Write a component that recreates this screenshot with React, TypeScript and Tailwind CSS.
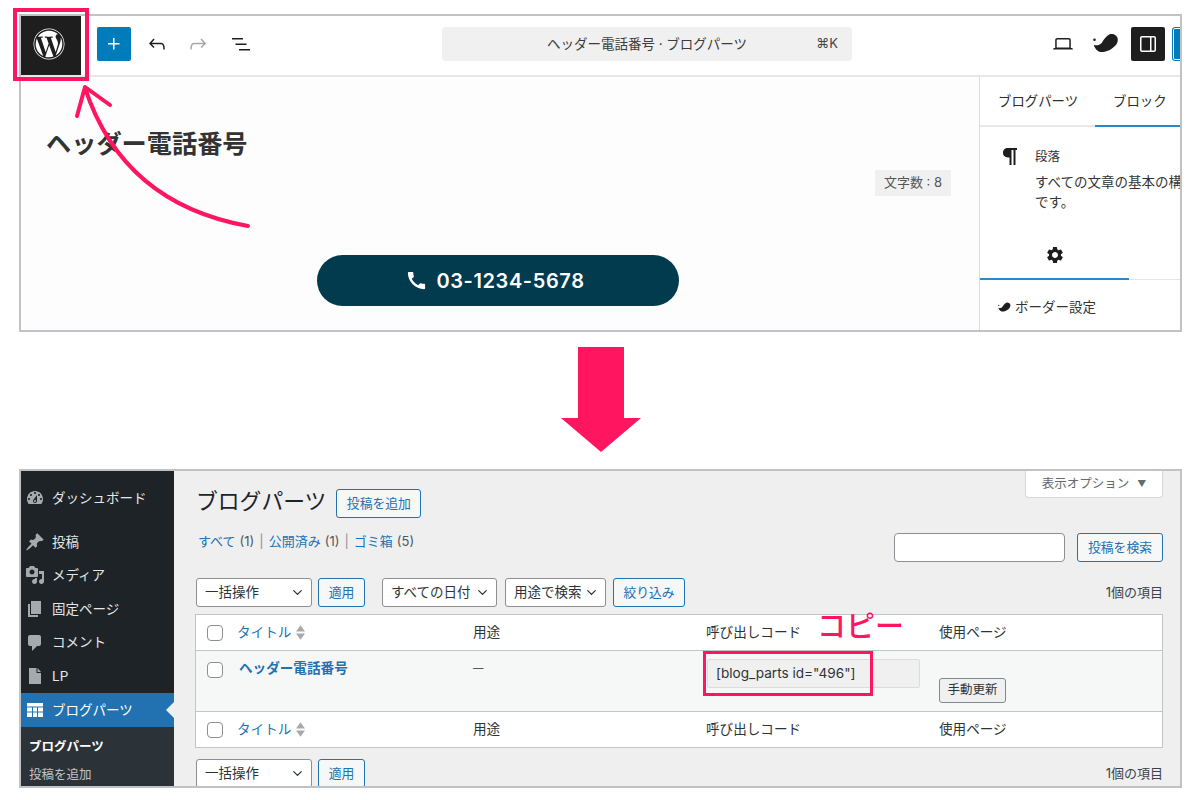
import type { ReactNode } from "react";
import { ChevronDown } from "lucide-react";
import { FaWordpress } from "react-icons/fa";
import { MdCall, MdSettings } from "react-icons/md";

function WpIcon({ d, className }: { d: string; className?: string }) {
  return (
    <svg viewBox="0 0 24 24" className={className} fill="currentColor">
      <path d={d} />
    </svg>
  );
}

function DashIcon({ d }: { d: string }) {
  return (
    <svg viewBox="0 0 20 20" className="h-[20px] w-[20px] shrink-0 text-[#a7aaad]" fill="currentColor">
      <path d={d} />
    </svg>
  );
}

function Bird({ className }: { className?: string }) {
  return (
    <svg viewBox="0 0 26 20" className={className} fill="currentColor">
      <circle cx="1.500" cy="6.700" r="1.300" />
      <path d="M0.800 11.700C3 12.500 5.500 12.500 7.500 11C9.500 9.500 10.500 6.500 12.200 5C14 3 16 1 18.200 1C21.500 1 24.800 3 24.800 6.700C24.800 9.500 23.500 11.500 22.200 12.800C20 15 17.500 17 14.800 17.800C12 19 9.500 19.300 7.500 19C4.500 18.500 1.800 15.500 0.800 11.700Z" />
    </svg>
  );
}

const dashIcons = {
  dashboard:
    "M3.760 16h12.480c1.100-1.370 1.760-3.110 1.760-5 0-4.420-3.580-8-8-8s-8 3.580-8 8c0 1.890.66 3.630 1.760 5zM10 4c.55 0 1 .45 1 1s-.45 1-1 1-1-.45-1-1 .45-1 1-1zM6 6c.55 0 1 .45 1 1s-.45 1-1 1-1-.45-1-1 .45-1 1-1zm8 0c.55 0 1 .45 1 1s-.45 1-1 1-1-.45-1-1 .45-1 1-1zm-5.370 5.550L12 7v6c0 1.100-.9 2-2 2s-2-.9-2-2c0-.57.24-1.080.63-1.450zM4 10c.55 0 1 .45 1 1s-.45 1-1 1-1-.45-1-1 .45-1 1-1zm12 0c.55 0 1 .45 1 1s-.45 1-1 1-1-.45-1-1 .45-1 1-1zm-5 3c0-.55-.45-1-1-1s-1 .45-1 1 .45 1 1 1 1-.45 1-1z",
  post: "M10.440 3.020l1.820-1.820 6.360 6.350-1.830 1.820c-1.050-.68-2.480-.57-3.410.36l-.75.75c-.92.93-1.040 2.350-.35 3.410l-1.830 1.820-2.410-2.410-2.800 2.790c-.42.42-3.380 2.710-3.800 2.290s1.860-3.390 2.280-3.810l2.790-2.790L4.100 9.360l1.830-1.820c1.050.69 2.480.57 3.400-.36l.75-.75c.93-.92 1.050-2.350.36-3.410z",
  media:
    "M13 11V4c0-.55-.45-1-1-1h-1.670L9 1H5L3.670 3H2c-.55 0-1 .45-1 1v7c0 .55.45 1 1 1h10c.55 0 1-.45 1-1zM7 4.500c1.380 0 2.500 1.120 2.500 2.500S8.380 9.500 7 9.500 4.500 8.380 4.500 7 5.620 4.500 7 4.500zM14 6h5v10.500c0 1.380-1.120 2.500-2.500 2.500S14 17.880 14 16.500s1.120-2.500 2.500-2.500c.17 0 .34.02.5.05V9h-3V6zm-4 8.050V13h2v3.500c0 1.380-1.120 2.500-2.500 2.500S7 17.880 7 16.500 8.120 14 9.500 14c.17 0 .34.02.5.05z",
  page: "M6 15V2h10v13H6zm-1 1h8v2H3V5h2v11z",
  comment: "M5 2h9c1.100 0 2 .9 2 2v7c0 1.100-.9 2-2 2h-2l-5 5v-5H5c-1.100 0-2-.9-2-2V4c0-1.100.9-2 2-2z",
  lp: "M4 2h7.500v5H16v11H4zM12.500 2L16 6h-3.500z",
  table:
    "M2 3h16v3.500H2zM2 7.500h5v4H2zM8 7.500h4v4H8zM13 7.500h5v4h-5zM2 12.500h5V17H2zM8 12.500h4V17H8zM13 12.500h5V17h-5z",
};

const menu = [
  { label: "投稿", icon: dashIcons.post },
  { label: "メディア", icon: dashIcons.media },
  { label: "固定ページ", icon: dashIcons.page },
  { label: "コメント", icon: dashIcons.comment },
  { label: "LP", icon: dashIcons.lp },
];

function Outline({ children, className = "" }: { children: ReactNode; className?: string }) {
  return (
    <div className={`flex h-[29px] items-center justify-center rounded-[3px] border border-[#2271b1] bg-[#f6f7f7] text-[12.800px] text-[#2271b1] ${className}`}>
      {children}
    </div>
  );
}

function Select({ label, className = "" }: { label: string; className?: string }) {
  return (
    <div className={`flex h-[29px] items-center justify-between rounded-[3px] border border-[#8c8f94] bg-white pl-[8px] pr-[6px] text-[13.500px] text-[#2c3338] ${className}`}>
      <span className="whitespace-nowrap">{label}</span>
      <ChevronDown size={15} strokeWidth={2} className="text-[#2c3338]" />
    </div>
  );
}

function Checkbox() {
  return <div className="h-[16px] w-[16px] rounded-[4px] border border-[#8c8f94] bg-white" />;
}

function SortArrows() {
  return (
    <svg viewBox="0 0 10 16" className="h-[15px] w-[9px] text-[#a7aaad]" fill="currentColor">
      <path d="M5 0l5 7H0zM0 9h10l-5 7z" />
    </svg>
  );
}

function HeadRow({ bottom }: { bottom?: boolean }) {
  return (
    <div className={`grid grid-cols-[41px_236px_233px_233px_1fr] items-center text-[13.600px] text-[#2c3338] ${bottom ? "h-[35px]" : "h-[36px] border-b border-[#c3c4c7]"}`}>
      <div className="pl-[11px]">
        <Checkbox />
      </div>
      <div className="flex items-center gap-[5px] text-[#2271b1]">
        タイトル
        <SortArrows />
      </div>
      <div>用途</div>
      <div>呼び出しコード</div>
      <div>使用ページ</div>
    </div>
  );
}

export default function App() {
  return (
    <div className="relative h-[800px] w-[1200px] overflow-hidden bg-white pl-[19px] pt-[14px] font-['Inter','Noto_Sans_CJK_JP',sans-serif]">
      {/* エディタ画面 */}
      <div className="flex h-[318px] w-[1163px] flex-col overflow-hidden border-2 border-[#c0c2c6] bg-white">
        <div className="flex h-[61px] shrink-0 items-center border-b-2 border-[#e8e8e8] pb-[3px]">
          <div className="flex h-[59px] w-[60px] shrink-0 items-center justify-center self-start bg-[#1e1e1e] pb-[4px] pr-[5px] text-white">
            <FaWordpress size={32} />
          </div>
          <div className="ml-[16px] flex h-[34px] w-[34px] shrink-0 items-center justify-center rounded-[2px] bg-[#007cba] text-white">
            <WpIcon d="M11 12.500V17.500H12.500V12.500H17.500V11H12.500V6H11V11H6V12.500H11Z" className="h-[24px] w-[24px]" />
          </div>
          <div className="ml-[9px] flex w-[34px] shrink-0 justify-center text-[#1e1e1e]">
            <WpIcon d="M18.300 11.700c-.6-.6-1.400-.9-2.300-.9H6.700l2.900-3.300-1.100-1-4.500 5L8.500 16l1-1-2.700-2.700H16c.5 0 .9.2 1.300.5 1 1 1 3.400 1 4.500v.3h1.500v-.2c0-1.500 0-4.300-1.500-5.700z" className="h-[24px] w-[24px]" />
          </div>
          <div className="ml-[7px] flex w-[34px] shrink-0 justify-center text-[#a8a8a8]">
            <WpIcon d="M15.600 6.500l-1.100 1 2.900 3.300H8c-.9 0-1.700.3-2.300.9-1.400 1.500-1.400 4.200-1.400 5.600v.2h1.500v-.3c0-1.100 0-3.500 1-4.500.3-.3.7-.5 1.300-.5h9.200L14.500 15l1.100 1.100 4.600-4.600-4.600-5z" className="h-[24px] w-[24px]" />
          </div>
          <div className="ml-[9px] flex w-[34px] shrink-0 justify-center text-[#1e1e1e]">
            <WpIcon d="M3 6h11v1.500H3V6zm3.500 5.500h11V13h-11v-1.500zM21 17H10v1.500h11V17z" className="h-[24px] w-[24px]" />
          </div>
          <div className="relative ml-[184px] flex h-[34px] w-[410px] shrink-0 items-center justify-center rounded-[4px] bg-[#f0f0f0] text-[13.500px] text-[#3c3c3c]">
            ヘッダー電話番号 · ブログパーツ
            <span className="absolute right-[14px] text-[13px] text-[#444]">⌘K</span>
          </div>
          <div className="ml-[199px] flex w-[24px] shrink-0 justify-center text-[#1e1e1e]">
            <WpIcon d="M20.500 16h-.7V8c0-1.100-.9-2-2-2H6.200c-1.100 0-2 .9-2 2v8h-.7c-.8 0-1.500.7-1.500 1.500h20c0-.8-.7-1.500-1.500-1.500zM5.700 8c0-.3.2-.5.5-.5h11.600c.3 0 .5.2.5.5v7.600H5.700V8z" className="h-[24px] w-[24px]" />
          </div>
          <Bird className="ml-[18px] h-[20px] w-[26px] shrink-0 -translate-y-px text-[#1e1e1e]" />
          <div className="ml-[12px] flex h-[34px] w-[34px] shrink-0 items-center justify-center rounded-[2px] bg-[#1e1e1e] text-white">
            <WpIcon d="M18 4H6c-1.100 0-2 .9-2 2v12c0 1.100.9 2 2 2h12c1.100 0 2-.9 2-2V6c0-1.100-.9-2-2-2zm-4 14.500H6c-.3 0-.5-.2-.5-.5V6c0-.3.2-.5.5-.5h8v13zm4.500-.5c0 .3-.2.5-.5.5h-2.500v-13H18c.3 0 .5.2.5.5v12z" className="h-[24px] w-[24px]" />
          </div>
          <div className="ml-[7px] h-[34px] w-[34px] shrink-0 rounded-[3px] border border-[#007cba] bg-[#007cba] shadow-[inset_0_0_0_1px_white]" />
        </div>

        <div className="flex min-h-0 flex-1">
          <div className="flex flex-1 flex-col bg-[#fdfdfd]">
            <div className="pl-[25px] pt-[49px] text-[25.200px] font-bold leading-[36px] text-[#333]">ヘッダー電話番号</div>
            <div className="flex justify-end pr-[28px] pt-[8px]">
              <div className="flex h-[26px] w-[76px] items-center justify-center bg-[#f0f0f0] text-[13px] text-[#555]">文字数 : 8</div>
            </div>
            <div className="pl-[296px] pt-[59px]">
              <div className="flex h-[51px] w-[362px] items-center justify-center gap-[8px] rounded-[26px] bg-[#023a4e] pr-[6px] text-[20px] font-semibold tracking-[0.6px] text-white">
                <MdCall size={23} />
                03-1234-5678
              </div>
            </div>
          </div>

          <div className="w-[201px] shrink-0 overflow-hidden border-l border-[#dcdcde] bg-white text-[#1e1e1e]">
            <div className="flex h-[50px] border-b-2 border-[#e8e8e8] text-[13.400px]">
              <div className="flex w-[115px] shrink-0 items-center pl-[18px] text-[#2c2c2c]">ブログパーツ</div>
              <div className="-mb-[2px] flex h-[50px] flex-1 items-center border-b-2 border-[#2b8ac6] pl-[18px] text-[#2c2c2c]">ブロック</div>
            </div>
            <div className="flex pl-[23px] pt-[21px]">
              <svg viewBox="0 0 14 17" className="h-[17px] w-[14px] shrink-0" fill="currentColor">
                <path d="M5 0H14V2H12.500V17H10.500V2H8.500V17H6.500V9.500H5C2 9.500 0 7.500 0 4.800C0 2 2 0 5 0Z" />
              </svg>
              <div className="ml-[18px]">
                <div className="text-[12.500px] leading-[18px] text-[#333]">段落</div>
                <div className="mt-[6px] whitespace-nowrap text-[13.500px] leading-[20px] text-[#333]">
                  すべての文章の基本の構成要素
                  <br />
                  です。
                </div>
              </div>
            </div>
            <div className="mt-[29px] flex h-[39px] border-b border-[#e4e4e4]">
              <div className="-mb-px flex w-[149px] items-center justify-center border-b-2 border-[#2b8ac6]">
                <MdSettings size={20} className="-mt-[9px]" />
              </div>
            </div>
            <div className="flex items-center gap-[4px] pl-[18px] pt-[17px] text-[13.500px] leading-[20px] text-[#333]">
              <Bird className="h-[10px] w-[13px] text-[#1e1e1e]" />
              ボーダー設定
            </div>
          </div>
        </div>
      </div>

      {/* 下向き矢印 */}
      <div className="flex w-[1163px] justify-center pt-[15px]">
        <svg viewBox="0 0 80 105" className="h-[105px] w-[80px]" fill="#ff1560">
          <path d="M17 0h46v71h17L40 105 0 71h17z" />
        </svg>
      </div>

      {/* 管理画面 */}
      <div className="mt-[17px] flex h-[319px] w-[1163px] overflow-hidden border-2 border-[#c0c2c6] bg-[#efefef] text-[#2c3338]">
        <div className="w-[153px] shrink-0 bg-[#1d2327] pt-[10px] text-[13.500px] text-[#e6e7e8]">
          <div className="mb-[10px] flex h-[34px] items-center gap-[7px] pl-[4px]">
            <DashIcon d={dashIcons.dashboard} />
            ダッシュボード
          </div>
          {menu.map((item) => (
            <div key={item.label} className="flex h-[33.600px] items-center gap-[7px] pl-[4px]">
              <DashIcon d={item.icon} />
              {item.label}
            </div>
          ))}
          <div className="relative flex h-[34px] items-center gap-[7px] bg-[#2271b1] pl-[4px] text-white">
            <svg viewBox="0 0 20 20" className="h-[20px] w-[20px] shrink-0" fill="white">
              <path d={dashIcons.table} />
            </svg>
            ブログパーツ
            <div className="absolute right-0 h-0 w-0 border-y-[8px] border-r-[8px] border-y-transparent border-r-[#efefef]" />
          </div>
          <div className="h-[80px] bg-[#2c3338] pl-[8px] pt-[9px] text-[12.500px] leading-[22px]">
            <div className="font-bold text-white">ブログパーツ</div>
            <div className="mt-[6px] text-[#c3c4c7]">投稿を追加</div>
          </div>
        </div>

        <div className="min-w-0 flex-1 pl-[22px] pr-[17px]">
          <div className="flex h-[47px] items-start">
            <div className="pt-[14px] text-[21.800px] leading-[33px] text-[#1d2327]">ブログパーツ</div>
            <Outline className="ml-[10px] mt-[18px] w-[85px]">投稿を追加</Outline>
            <div className="ml-auto flex h-[27px] w-[138px] items-center justify-center gap-[8px] rounded-b-[4px] border border-t-0 border-[#d5d6d8] bg-white text-[12.500px] text-[#646970]">
              表示オプション
              <span className="text-[9px]">▼</span>
            </div>
          </div>

          <div className="mt-[15px] flex h-[29px] items-start text-[13px] text-[#50575e]">
            <div className="flex h-[18px] items-center">
              <span className="pl-[2px] text-[#2271b1]">すべて</span>
              <span className="ml-[4px]">(1)</span>
              <span className="mx-[5px] text-[#8c8f94]">|</span>
              <span className="text-[#2271b1]">公開済み</span>
              <span className="ml-[4px]">(1)</span>
              <span className="mx-[5px] text-[#8c8f94]">|</span>
              <span className="text-[#2271b1]">ゴミ箱</span>
              <span className="ml-[4px]">(5)</span>
            </div>
            <div className="ml-auto h-[29px] w-[171px] rounded-[4px] border border-[#8c8f94] bg-white" />
            <Outline className="ml-[12px] w-[86px]">投稿を検索</Outline>
          </div>

          <div className="mt-[16px] flex h-[29px] items-center">
            <Select label="一括操作" className="w-[116px]" />
            <Outline className="ml-[6px] w-[47px]">適用</Outline>
            <Select label="すべての日付" className="ml-[17px] w-[115px]" />
            <Select label="用途で検索" className="ml-[8px] w-[101px]" />
            <Outline className="ml-[7px] w-[72px]">絞り込み</Outline>
            <span className="ml-auto text-[13px] text-[#3c434a]">1個の項目</span>
          </div>

          <div className="-ml-px mt-[7px] border border-[#c3c4c7] bg-white">
            <HeadRow />
            <div className="grid h-[61px] grid-cols-[41px_236px_233px_233px_1fr] border-b border-[#c3c4c7] bg-[#f6f7f7] text-[13.600px]">
              <div className="pl-[11px] pt-[11px]">
                <Checkbox />
              </div>
              <div className="pl-[2px] pt-[7px] font-bold text-[#2271b1]">ヘッダー電話番号</div>
              <div className="pt-[10px] text-[10.500px]">—</div>
              <div className="pl-[1px] pt-[8px]">
                <div className="flex h-[29px] w-[213px] items-center rounded-[2px] border border-[#dcdcde] bg-[#f0f0f1] pl-[8px] text-[13.600px] text-[#2c3338]">
                  [blog_parts id="496"]
                </div>
              </div>
              <div className="pt-[27px]">
                <div className="flex h-[25px] w-[67px] items-center justify-center rounded-[3px] border border-[#7e8993] bg-[#f0f0f1] text-[12.500px]">手動更新</div>
              </div>
            </div>
            <HeadRow bottom />
          </div>

          <div className="mt-[11px] flex h-[29px] items-center">
            <Select label="一括操作" className="w-[116px]" />
            <Outline className="ml-[6px] w-[47px]">適用</Outline>
            <span className="ml-auto text-[13px] text-[#3c434a]">1個の項目</span>
          </div>
        </div>
      </div>

      {/* 注釈 */}
      <div className="absolute left-[13px] top-[8px] h-[73px] w-[76px] border-[4px] border-[#ff1560]" />
      <svg viewBox="0 0 300 240" className="absolute left-0 top-0 h-[240px] w-[300px]" fill="none" stroke="#ff1560" strokeWidth="4" strokeLinecap="round" strokeLinejoin="round">
        <path d="M248 226C170 212 112 170 85 88" />
        <path d="M77 116L85 87L110 105" />
      </svg>
      <div className="absolute left-[703px] top-[651px] h-[45px] w-[170px] border-[3px] border-[#ff1560]" />
      <div className="absolute left-[817px] top-[606px] text-[29px] font-medium leading-[41px] text-[#ff1560]">コピー</div>
    </div>
  );
}
